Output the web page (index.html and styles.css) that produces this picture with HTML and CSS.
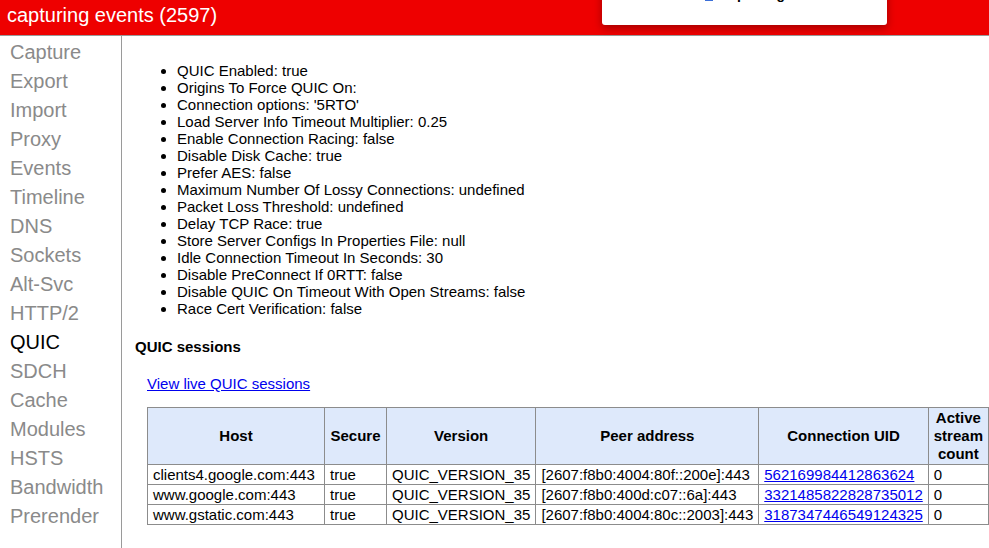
FILE: index.html
```html
<!DOCTYPE html>
<html>
<head>
<meta charset="utf-8">
<link rel="stylesheet" href="styles.css">
</head>
<body>
<div class="header">
  <span class="title">capturing events (2597)</span>
  <div class="popup">
    <span class="popup-icon"></span><span class="popup-text">Capturing</span>
  </div>
</div>
<div class="main">
  <nav class="sidebar">
    <div class="tab">Capture</div>
    <div class="tab">Export</div>
    <div class="tab">Import</div>
    <div class="tab">Proxy</div>
    <div class="tab">Events</div>
    <div class="tab">Timeline</div>
    <div class="tab">DNS</div>
    <div class="tab">Sockets</div>
    <div class="tab">Alt-Svc</div>
    <div class="tab">HTTP/2</div>
    <div class="tab active">QUIC</div>
    <div class="tab">SDCH</div>
    <div class="tab">Cache</div>
    <div class="tab">Modules</div>
    <div class="tab">HSTS</div>
    <div class="tab">Bandwidth</div>
    <div class="tab">Prerender</div>
  </nav>
  <div class="content">
    <ul class="settings">
      <li>QUIC Enabled: true</li>
      <li>Origins To Force QUIC On:</li>
      <li>Connection options: '5RTO'</li>
      <li>Load Server Info Timeout Multiplier: 0.25</li>
      <li>Enable Connection Racing: false</li>
      <li>Disable Disk Cache: true</li>
      <li>Prefer AES: false</li>
      <li>Maximum Number Of Lossy Connections: undefined</li>
      <li>Packet Loss Threshold: undefined</li>
      <li>Delay TCP Race: true</li>
      <li>Store Server Configs In Properties File: null</li>
      <li>Idle Connection Timeout In Seconds: 30</li>
      <li>Disable PreConnect If 0RTT: false</li>
      <li>Disable QUIC On Timeout With Open Streams: false</li>
      <li>Race Cert Verification: false</li>
    </ul>
    <h4 class="section-title">QUIC sessions</h4>
    <div class="indent">
      <a class="link" href="#">View live QUIC sessions</a>
      <table class="sessions">
        <thead>
          <tr>
            <th class="c-host">Host</th>
            <th class="c-secure">Secure</th>
            <th>Version</th>
            <th>Peer address</th>
            <th>Connection UID</th>
            <th class="c-active">Active stream count</th>
            <th class="c-more">Active streams</th>
          </tr>
        </thead>
        <tbody>
          <tr>
            <td>clients4.google.com:443</td>
            <td>true</td>
            <td>QUIC_VERSION_35</td>
            <td>[2607:f8b0:4004:80f::200e]:443</td>
            <td><a class="link" href="#">562169984412863624</a></td>
            <td>0</td>
            <td></td>
          </tr>
          <tr>
            <td>www.google.com:443</td>
            <td>true</td>
            <td>QUIC_VERSION_35</td>
            <td>[2607:f8b0:400d:c07::6a]:443</td>
            <td><a class="link" href="#">3321485822828735012</a></td>
            <td>0</td>
            <td></td>
          </tr>
          <tr>
            <td>www.gstatic.com:443</td>
            <td>true</td>
            <td>QUIC_VERSION_35</td>
            <td>[2607:f8b0:4004:80c::2003]:443</td>
            <td><a class="link" href="#">3187347446549124325</a></td>
            <td>0</td>
            <td></td>
          </tr>
        </tbody>
      </table>
    </div>
  </div>
</div>
</body>
</html>
```

FILE: styles.css
```css
html, body {
  margin: 0;
  padding: 0;
  width: 989px;
  height: 548px;
  overflow: hidden;
  background: #fff;
  font-family: "Liberation Sans", Arial, sans-serif;
  color: #000;
}

.header {
  position: relative;
  height: 35px;
  background: #ee0000;
  border-bottom: 1px solid #9a9a9a;
  display: flex;
  align-items: center;
}

.title {
  color: #fff;
  font-size: 20px;
  padding-left: 7px;
  margin-top: -5px;
}

.popup {
  position: absolute;
  left: 602px;
  top: -20px;
  width: 285px;
  height: 45px;
  background: #fff;
  border-radius: 0 0 3px 3px;
  box-shadow: 0 3px 9px rgba(110, 0, 0, 0.6);
  display: flex;
  align-items: flex-start;
  padding-top: 7px;
  box-sizing: border-box;
  padding-left: 103px;
  gap: 6px;
}

.popup-icon {
  width: 8px;
  height: 12px;
  background: #3b6fd8;
  margin-top: 2px;
}

.popup-text {
  font-size: 14px;
  font-weight: bold;
  line-height: 14px;
}

.main {
  display: flex;
  height: 512px;
}

.sidebar {
  flex: none;
  width: 122px;
  border-right: 1px solid #9a9a9a;
  padding-top: 2px;
  box-sizing: border-box;
}

.tab {
  font-size: 20px;
  line-height: 29px;
  color: #8a8a8a;
  padding-left: 10px;
}

.tab.active {
  color: #000;
}

.content {
  flex: 1;
  padding-left: 13px;
  min-width: 0;
}

.settings {
  margin: 26px 0 0 0;
  padding-left: 42px;
  font-size: 15px;
  line-height: 17px;
}

.section-title {
  font-size: 15px;
  font-weight: bold;
  margin: 21px 0 0 0;
  line-height: 17px;
}

.indent {
  padding-left: 12px;
  padding-top: 20px;
}

.link {
  color: #0000ee;
  text-decoration: underline;
  font-size: 15px;
}

.indent > .link {
  display: inline-block;
  line-height: 17px;
}

.sessions {
  margin-top: 14px;
  border-collapse: collapse;
  font-size: 15px;
  white-space: nowrap;
}

.sessions th,
.sessions td {
  border: 1px solid #8c8c8c;
  padding: 0 5px;
}

.sessions th {
  background: #dee9fb;
  height: 56px;
  font-weight: bold;
  line-height: 18px;
  text-align: center;
}

.sessions td {
  height: 19px;
  line-height: 19px;
}

.sessions .c-host { min-width: 166px; }
.sessions .c-secure { min-width: 51px; }
.sessions .c-active { width: 51px; white-space: normal; }
.sessions .c-more { width: 60px; white-space: normal; }
```
